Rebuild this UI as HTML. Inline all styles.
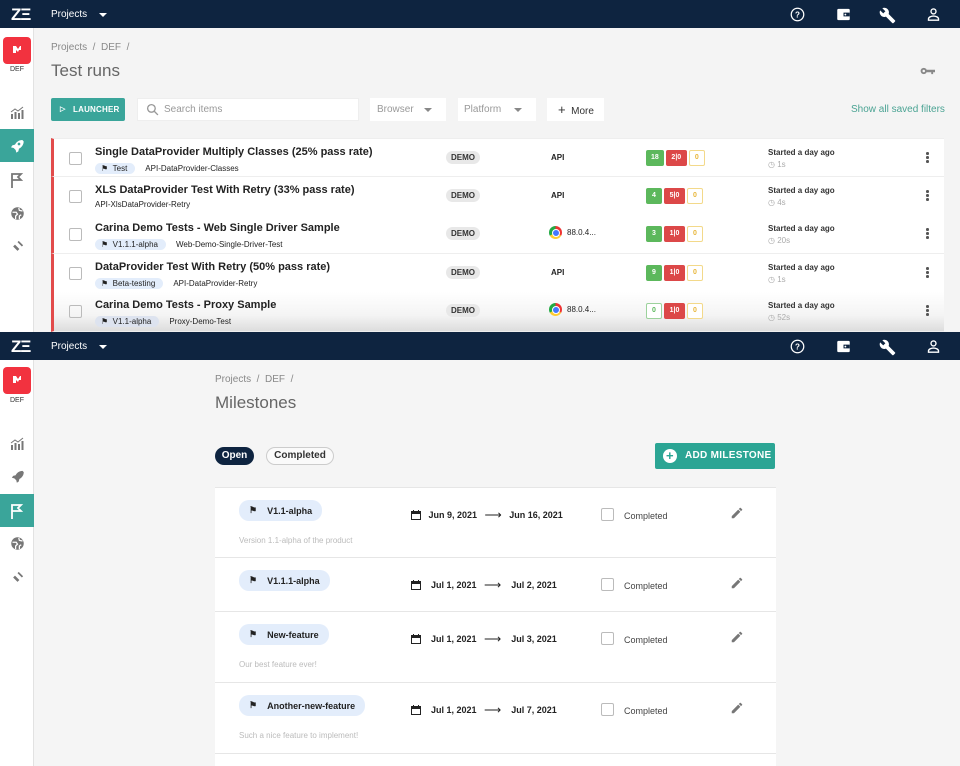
<!DOCTYPE html>
<html><head><meta charset="utf-8"><style>
*{box-sizing:border-box;margin:0;padding:0}
body{width:960px;height:766px;overflow:hidden;font-family:"Liberation Sans",Arial,sans-serif;background:#f4f4f4;position:relative;color:#222}
.nav{position:absolute;left:0;width:960px;height:28px;background:#0e2440;color:#fff}
.nav .logo{position:absolute;left:11px;top:5px;font-weight:bold;font-size:17px;letter-spacing:-1px}
.nav .proj{position:absolute;left:51px;top:9px;font-size:10px}
.nav .caret{position:absolute;left:99px;top:13px;border:4px solid transparent;border-top:4px solid #fff;border-bottom:0}
.nav .ic{position:absolute;top:7px}
.side{position:absolute;left:0;width:34px;background:#fff;border-right:1px solid #e2e2e2}
.side .red{position:absolute;left:3px;width:28px;height:27px;background:#f2323f;border-radius:4px}
.side .def{position:absolute;width:34px;text-align:center;font-size:7px;color:#333}
.side .it{position:absolute;left:0;width:34px;height:33px;display:flex;align-items:center;justify-content:center}
.side .act{background:#3aa59a}
.abs{position:absolute}
.crumb{font-size:10px;color:#888}
.title{font-size:17px;color:#666}
.row{position:absolute;left:51px;width:893px;height:38.5px;background:#fff;border-bottom:1px solid #eee;border-left:3px solid #e24b4b}
.row .cb{position:absolute;left:15px;top:13px;width:13px;height:13px;border:1.5px solid #bbb;border-radius:2px}
.row .t{position:absolute;left:41px;top:7px;font-size:11px;font-weight:bold;color:#222}
.row .s{position:absolute;left:41px;top:24px;font-size:8px;color:#222;display:flex;gap:10px;align-items:center}
.tag{background:#e3edfb;border-radius:8px;padding:1px 8px 1px 6px;font-size:8px}
.demo{position:absolute;left:392px;top:12px;background:#e8e8e8;border-radius:7px;font-size:8px;font-weight:bold;padding:2px 5px;color:#333}
.plat{position:absolute;left:497px;top:14px;font-size:8px;font-weight:bold}
.br{position:absolute;left:495px;top:11px;font-size:8px;display:flex;align-items:center;gap:5px}
.chrome{width:13px;height:13px;border-radius:50%;background:conic-gradient(#e33 0 120deg,#fc3 120deg 240deg,#2a4 240deg);position:relative}
.chrome:after{content:"";position:absolute;width:6px;height:6px;border-radius:50%;background:#47f;border:1px solid #fff;box-sizing:content-box;left:2.5px;top:2.5px}
.st{position:absolute;left:592px;top:11px;display:flex;gap:2px;font-size:7px;color:#fff;font-weight:bold}
.st span{height:16px;line-height:16px;padding:0 5px;border-radius:2px;text-align:center;min-width:16px}
.g{background:#5cb85c}.r{background:#dc4848;min-width:21px!important}.y{border:1px solid #f3d98a;color:#e8b63a;background:#fff;line-height:14px!important}
.tm{position:absolute;left:714px;top:9px;font-size:8px;font-weight:bold;color:#333}
.tm div{color:#aaa;font-weight:normal;margin-top:3px}
.dots{position:absolute;left:872px;top:13px;width:3px}
.dots i{display:block;width:2.5px;height:2.5px;background:#555;border-radius:50%;margin-bottom:1.5px}
.mrow{position:absolute;left:215px;width:561px;background:#fff;border-bottom:1px solid #e6e6e6}
.mtag{position:absolute;left:24px;top:12px;background:#e3edfb;border-radius:10px;padding:5px 10px 5px 10px;font-size:9px;font-weight:bold;display:flex;gap:10px;align-items:center}
.md{position:absolute;left:196px;top:20px;font-size:9px;font-weight:bold;display:flex;align-items:center}
.mcb{position:absolute;left:386px;top:20px;width:13px;height:13px;border:1.5px solid #bbb;border-radius:2px}
.mc{position:absolute;left:409px;top:23px;font-size:9px;color:#444}
.pen{position:absolute;left:515px;top:18px}
.desc{position:absolute;left:24px;top:48px;font-size:8px;color:#bbb}
</style></head><body>

<!-- TOP PANEL -->
<div class="nav" style="top:0">
<div class="logo">ZΞ</div><div class="proj">Projects</div><div class="caret"></div>
<svg class="ic" style="left:790px" width="15" height="15" viewBox="0 0 24 24"><circle cx="12" cy="12" r="10" fill="none" stroke="#fff" stroke-width="2"/><text x="12" y="17" font-size="13" fill="#fff" text-anchor="middle" font-family="Liberation Sans" font-weight="bold">?</text></svg>
<svg class="ic" style="left:836px" width="15" height="15" viewBox="0 0 24 24"><rect x="2" y="3" width="20" height="18" rx="2" fill="#fff"/><rect x="12" y="9" width="10" height="6" fill="#0e2440"/><circle cx="15" cy="12" r="1.5" fill="#fff"/></svg>
<svg class="ic" style="left:879px" width="17" height="17" viewBox="0 0 24 24"><path d="M22.7 19l-9.1-9.1c.9-2.3.4-5-1.5-6.9-2-2-5-2.4-7.4-1.3L9 6 6 9 1.6 4.7C.4 7.1.9 10.1 2.9 12.1c1.9 1.9 4.6 2.4 6.9 1.5l9.1 9.1c.4.4 1 .4 1.4 0l2.3-2.3c.5-.4.5-1.1.1-1.4z" fill="#fff"/></svg>
<svg class="ic" style="left:926px" width="15" height="15" viewBox="0 0 24 24"><circle cx="12" cy="7" r="4" fill="none" stroke="#fff" stroke-width="2.2"/><path d="M4 21v-2c0-3 5-4.5 8-4.5s8 1.5 8 4.5v2z" fill="none" stroke="#fff" stroke-width="2.2"/></svg>
</div>
<div class="side" style="top:28px;height:304px">
<div class="red" style="top:9px"><svg width="28" height="27" viewBox="0 0 28 27"><path d="M10 9h3l2 3 2-3h1v4h-2l-1 2-2-2v3h-3z" fill="#fff"/></svg></div>
<div class="def" style="top:38px">DEF</div>
<div class="it" style="top:68px"><svg width="14" height="14" viewBox="0 0 14 14" fill="#777"><rect x="1" y="8" width="2" height="5"/><rect x="4.5" y="6" width="2" height="7"/><rect x="8" y="7" width="2" height="6"/><rect x="11.5" y="4" width="2" height="9"/><path d="M1 6l4-3 3 2 5-4" stroke="#777" fill="none"/></svg></div>
<div class="it act" style="top:101px"><svg width="16" height="16" viewBox="0 0 24 24" fill="#fff"><path d="M20 3c-5 0-9 3-11 7l-4 1-2 3 4 1 3 3 1 4 3-2 1-4c4-2 7-6 7-11z"/><circle cx="15" cy="9" r="2" fill="#3aa59a"/></svg></div>
<div class="it" style="top:135px"><svg width="14" height="16" viewBox="0 0 14 16" fill="none" stroke="#777" stroke-width="1.8"><path d="M2 16V2h9l-3 3 3 3H2"/></svg></div>
<div class="it" style="top:169px"><svg width="15" height="15" viewBox="0 0 24 24"><circle cx="12" cy="12" r="10" fill="#777"/><path d="M4 10h6l2 3-3 3v5M14 3l1 4 5 1M15 21v-5l3-2" stroke="#fff" stroke-width="2" fill="none"/></svg></div>
<div class="it" style="top:202px"><svg width="15" height="15" viewBox="0 0 24 24" fill="#777"><path d="M3 21l4-4M21 3l-4 4M8 9l7 7-3 3-7-7zM12 5l7 7 2-2-7-7z"/></svg></div>
</div>
<div class="abs crumb" style="left:51px;top:42px">Projects &nbsp;/ &nbsp;DEF &nbsp;/</div>
<div class="abs title" style="left:51px;top:61px">Test runs</div>
<svg class="abs" style="left:920px;top:66px" width="15" height="10" viewBox="0 0 24 14" fill="#888"><circle cx="6" cy="7" r="5"/><circle cx="6" cy="7" r="2" fill="#f4f4f4"/><rect x="10" y="5" width="14" height="4"/><rect x="18" y="8" width="3" height="4"/></svg>
<div class="abs" style="left:51px;top:98px;width:74px;height:23px;background:#3aa59a;border-radius:2px;color:#fff;font-size:8px;font-weight:bold;line-height:23px;padding-left:22px;letter-spacing:.2px">LAUNCHER<span style="position:absolute;left:9px;top:0;font-size:7px">▷</span></div>
<div class="abs" style="left:137px;top:98px;width:222px;height:23px;background:#fff;border:1px solid #eee;font-size:10px;color:#999;line-height:21px;padding-left:26px">Search items<svg style="position:absolute;left:8px;top:4px" width="13" height="13" viewBox="0 0 24 24" fill="none" stroke="#999" stroke-width="2.5"><circle cx="10" cy="10" r="7"/><path d="M15 15l7 7"/></svg></div>
<div class="abs" style="left:370px;top:98px;width:76px;height:23px;background:#fff;font-size:10px;color:#999;line-height:23px;padding-left:7px">Browser<span style="position:absolute;left:54px;top:10px;border:4px solid transparent;border-top:4px solid #888;border-bottom:0"></span></div>
<div class="abs" style="left:458px;top:98px;width:78px;height:23px;background:#fff;font-size:10px;color:#999;line-height:23px;padding-left:6px">Platform<span style="position:absolute;left:56px;top:10px;border:4px solid transparent;border-top:4px solid #888;border-bottom:0"></span></div>
<div class="abs" style="left:547px;top:98px;width:57px;height:23px;background:#fff;font-size:10px;color:#333;line-height:23px;padding-left:11px"><b style="font-size:13px;font-weight:normal">+</b>&nbsp; More</div>
<div class="abs" style="left:851px;top:104px;font-size:10px;color:#4aa393">Show all saved filters</div>

<div class="row" style="top:138px;border-top:1px solid #eee"><div class="cb"></div><div class="t">Single DataProvider Multiply Classes (25% pass rate)</div><div class="s"><span class="tag">⚑ &nbsp;Test</span>API-DataProvider-Classes</div><div class="demo">DEMO</div><div class="plat">API</div><div class="st"><span class="g">18</span><span class="r">2|0</span><span class="y">0</span></div><div class="tm">Started a day ago<div>◷ 1s</div></div><div class="dots"><i></i><i></i><i></i></div></div>
<div class="row" style="top:177px"><div class="cb"></div><div class="t">XLS DataProvider Test With Retry (33% pass rate)</div><div class="s" style="top:23px">API-XlsDataProvider-Retry</div><div class="demo">DEMO</div><div class="plat">API</div><div class="st"><span class="g">4</span><span class="r">5|0</span><span class="y">0</span></div><div class="tm">Started a day ago<div>◷ 4s</div></div><div class="dots"><i></i><i></i><i></i></div></div>
<div class="row" style="top:215px"><div class="cb"></div><div class="t">Carina Demo Tests - Web Single Driver Sample</div><div class="s"><span class="tag">⚑ &nbsp;V1.1.1-alpha</span>Web-Demo-Single-Driver-Test</div><div class="demo">DEMO</div><div class="br"><div class="chrome"></div>88.0.4...</div><div class="st"><span class="g">3</span><span class="r">1|0</span><span class="y">0</span></div><div class="tm">Started a day ago<div>◷ 20s</div></div><div class="dots"><i></i><i></i><i></i></div></div>
<div class="row" style="top:254px"><div class="cb"></div><div class="t">DataProvider Test With Retry (50% pass rate)</div><div class="s"><span class="tag">⚑ &nbsp;Beta-testing</span>API-DataProvider-Retry</div><div class="demo">DEMO</div><div class="plat">API</div><div class="st"><span class="g">9</span><span class="r">1|0</span><span class="y">0</span></div><div class="tm">Started a day ago<div>◷ 1s</div></div><div class="dots"><i></i><i></i><i></i></div></div>
<div class="row" style="top:292px;height:40px;background:linear-gradient(#fff,#f4f4f4 60%,#ddd)"><div class="cb"></div><div class="t">Carina Demo Tests - Proxy Sample</div><div class="s"><span class="tag" style="background:#dde3ef">⚑ &nbsp;V1.1-alpha</span>Proxy-Demo-Test</div><div class="demo">DEMO</div><div class="br"><div class="chrome"></div>88.0.4...</div><div class="st"><span class="y" style="border-color:#9cd29c;color:#5cb85c">0</span><span class="r">1|0</span><span class="y">0</span></div><div class="tm">Started a day ago<div>◷ 52s</div></div><div class="dots"><i></i><i></i><i></i></div></div>

<!-- BOTTOM PANEL -->
<div class="abs" style="left:0;top:332px;width:960px;height:434px;background:#f5f5f5"></div>
<div class="nav" style="top:332px">
<div class="logo">ZΞ</div><div class="proj">Projects</div><div class="caret"></div>
<svg class="ic" style="left:790px" width="15" height="15" viewBox="0 0 24 24"><circle cx="12" cy="12" r="10" fill="none" stroke="#fff" stroke-width="2"/><text x="12" y="17" font-size="13" fill="#fff" text-anchor="middle" font-family="Liberation Sans" font-weight="bold">?</text></svg>
<svg class="ic" style="left:836px" width="15" height="15" viewBox="0 0 24 24"><rect x="2" y="3" width="20" height="18" rx="2" fill="#fff"/><rect x="12" y="9" width="10" height="6" fill="#0e2440"/><circle cx="15" cy="12" r="1.5" fill="#fff"/></svg>
<svg class="ic" style="left:879px" width="17" height="17" viewBox="0 0 24 24"><path d="M22.7 19l-9.1-9.1c.9-2.3.4-5-1.5-6.9-2-2-5-2.4-7.4-1.3L9 6 6 9 1.6 4.7C.4 7.1.9 10.1 2.9 12.1c1.9 1.9 4.6 2.4 6.9 1.5l9.1 9.1c.4.4 1 .4 1.4 0l2.3-2.3c.5-.4.5-1.1.1-1.4z" fill="#fff"/></svg>
<svg class="ic" style="left:926px" width="15" height="15" viewBox="0 0 24 24"><circle cx="12" cy="7" r="4" fill="none" stroke="#fff" stroke-width="2.2"/><path d="M4 21v-2c0-3 5-4.5 8-4.5s8 1.5 8 4.5v2z" fill="none" stroke="#fff" stroke-width="2.2"/></svg>
</div>
<div class="side" style="top:360px;height:406px">
<div class="red" style="top:7px"><svg width="28" height="27" viewBox="0 0 28 27"><path d="M10 9h3l2 3 2-3h1v4h-2l-1 2-2-2v3h-3z" fill="#fff"/></svg></div>
<div class="def" style="top:37px">DEF</div>
<div class="it" style="top:67px"><svg width="14" height="14" viewBox="0 0 14 14" fill="#777"><rect x="1" y="8" width="2" height="5"/><rect x="4.5" y="6" width="2" height="7"/><rect x="8" y="7" width="2" height="6"/><rect x="11.5" y="4" width="2" height="9"/><path d="M1 6l4-3 3 2 5-4" stroke="#777" fill="none"/></svg></div>
<div class="it" style="top:100px"><svg width="15" height="15" viewBox="0 0 24 24" fill="#777"><path d="M20 3c-5 0-9 3-11 7l-4 1-2 3 4 1 3 3 1 4 3-2 1-4c4-2 7-6 7-11z"/></svg></div>
<div class="it act" style="top:134px"><svg width="14" height="16" viewBox="0 0 14 16" fill="none" stroke="#fff" stroke-width="1.8"><path d="M2 16V2h9l-3 3 3 3H2"/></svg></div>
<div class="it" style="top:167px"><svg width="15" height="15" viewBox="0 0 24 24"><circle cx="12" cy="12" r="10" fill="#777"/><path d="M4 10h6l2 3-3 3v5M14 3l1 4 5 1M15 21v-5l3-2" stroke="#fff" stroke-width="2" fill="none"/></svg></div>
<div class="it" style="top:201px"><svg width="15" height="15" viewBox="0 0 24 24" fill="#777"><path d="M3 21l4-4M21 3l-4 4M8 9l7 7-3 3-7-7zM12 5l7 7 2-2-7-7z"/></svg></div>
</div>
<div class="abs crumb" style="left:215px;top:374px">Projects &nbsp;/ &nbsp;DEF &nbsp;/</div>
<div class="abs title" style="left:215px;top:393px">Milestones</div>
<div class="abs" style="left:215px;top:447px;width:39px;height:18px;background:#0e2440;color:#fff;border-radius:9px;font-size:10px;text-align:center;line-height:18px;font-weight:bold">Open</div>
<div class="abs" style="left:266px;top:447px;width:68px;height:18px;border:1px solid #ccc;color:#333;border-radius:9px;font-size:10px;text-align:center;line-height:16px;font-weight:bold;background:#fafafa">Completed</div>
<div class="abs" style="left:655px;top:443px;width:120px;height:26px;background:#2ba594;border-radius:2px;color:#fff;font-size:10px;font-weight:bold;line-height:26px;padding-left:30px;letter-spacing:.3px">ADD MILESTONE<span style="position:absolute;left:8px;top:6px;width:14px;height:14px;border-radius:50%;background:#fff;color:#2ba594;line-height:14px;text-align:center;font-size:13px">+</span></div>

<div class="mrow" style="top:487px;height:71px;border-top:1px solid #e6e6e6"><div class="mtag">⚑<span>V1.1-alpha</span></div><div class="md"><svg width="10" height="10" viewBox="0 0 10 10"><rect x="0.5" y="1.5" width="9" height="8" fill="none" stroke="#222"/><rect x="0.5" y="1.5" width="9" height="2.5" fill="#222"/><rect x="2" y="0" width="1" height="2" fill="#222"/><rect x="7" y="0" width="1" height="2" fill="#222"/></svg>&nbsp;&nbsp;&nbsp;Jun 9, 2021&nbsp;&nbsp;&nbsp;<span style="font-weight:normal;font-size:12px">⟶</span>&nbsp;&nbsp;&nbsp;Jun 16, 2021</div><div class="mcb"></div><div class="mc">Completed</div><svg class="pen" width="14" height="14" viewBox="0 0 24 24" fill="#777"><path d="M3 17.25V21h3.75L17.8 9.94l-3.75-3.75zM20.7 7.04a1 1 0 000-1.41l-2.34-2.34a1 1 0 00-1.41 0l-1.83 1.83 3.75 3.75z"/></svg><div class="desc">Version 1.1-alpha of the product</div></div>
<div class="mrow" style="top:558px;height:54px"><div class="mtag">⚑<span>V1.1.1-alpha</span></div><div class="md"><svg width="10" height="10" viewBox="0 0 10 10"><rect x="0.5" y="1.5" width="9" height="8" fill="none" stroke="#222"/><rect x="0.5" y="1.5" width="9" height="2.5" fill="#222"/><rect x="2" y="0" width="1" height="2" fill="#222"/><rect x="7" y="0" width="1" height="2" fill="#222"/></svg>&nbsp;&nbsp;&nbsp;&nbsp;Jul 1, 2021&nbsp;&nbsp;&nbsp;<span style="font-weight:normal;font-size:12px">⟶</span>&nbsp;&nbsp;&nbsp;&nbsp;Jul 2, 2021</div><div class="mcb"></div><div class="mc">Completed</div><svg class="pen" width="14" height="14" viewBox="0 0 24 24" fill="#777"><path d="M3 17.25V21h3.75L17.8 9.94l-3.75-3.75zM20.7 7.04a1 1 0 000-1.41l-2.34-2.34a1 1 0 00-1.41 0l-1.83 1.83 3.75 3.75z"/></svg></div>
<div class="mrow" style="top:612px;height:71px"><div class="mtag">⚑<span>New-feature</span></div><div class="md"><svg width="10" height="10" viewBox="0 0 10 10"><rect x="0.5" y="1.5" width="9" height="8" fill="none" stroke="#222"/><rect x="0.5" y="1.5" width="9" height="2.5" fill="#222"/><rect x="2" y="0" width="1" height="2" fill="#222"/><rect x="7" y="0" width="1" height="2" fill="#222"/></svg>&nbsp;&nbsp;&nbsp;&nbsp;Jul 1, 2021&nbsp;&nbsp;&nbsp;<span style="font-weight:normal;font-size:12px">⟶</span>&nbsp;&nbsp;&nbsp;&nbsp;Jul 3, 2021</div><div class="mcb"></div><div class="mc">Completed</div><svg class="pen" width="14" height="14" viewBox="0 0 24 24" fill="#777"><path d="M3 17.25V21h3.75L17.8 9.94l-3.75-3.75zM20.7 7.04a1 1 0 000-1.41l-2.34-2.34a1 1 0 00-1.41 0l-1.83 1.83 3.75 3.75z"/></svg><div class="desc">Our best feature ever!</div></div>
<div class="mrow" style="top:683px;height:71px"><div class="mtag">⚑<span>Another-new-feature</span></div><div class="md"><svg width="10" height="10" viewBox="0 0 10 10"><rect x="0.5" y="1.5" width="9" height="8" fill="none" stroke="#222"/><rect x="0.5" y="1.5" width="9" height="2.5" fill="#222"/><rect x="2" y="0" width="1" height="2" fill="#222"/><rect x="7" y="0" width="1" height="2" fill="#222"/></svg>&nbsp;&nbsp;&nbsp;&nbsp;Jul 1, 2021&nbsp;&nbsp;&nbsp;<span style="font-weight:normal;font-size:12px">⟶</span>&nbsp;&nbsp;&nbsp;&nbsp;Jul 7, 2021</div><div class="mcb"></div><div class="mc">Completed</div><svg class="pen" width="14" height="14" viewBox="0 0 24 24" fill="#777"><path d="M3 17.25V21h3.75L17.8 9.94l-3.75-3.75zM20.7 7.04a1 1 0 000-1.41l-2.34-2.34a1 1 0 00-1.41 0l-1.83 1.83 3.75 3.75z"/></svg><div class="desc">Such a nice feature to implement!</div></div>
<div class="mrow" style="top:754px;height:12px;border:0"></div>
</body></html>
